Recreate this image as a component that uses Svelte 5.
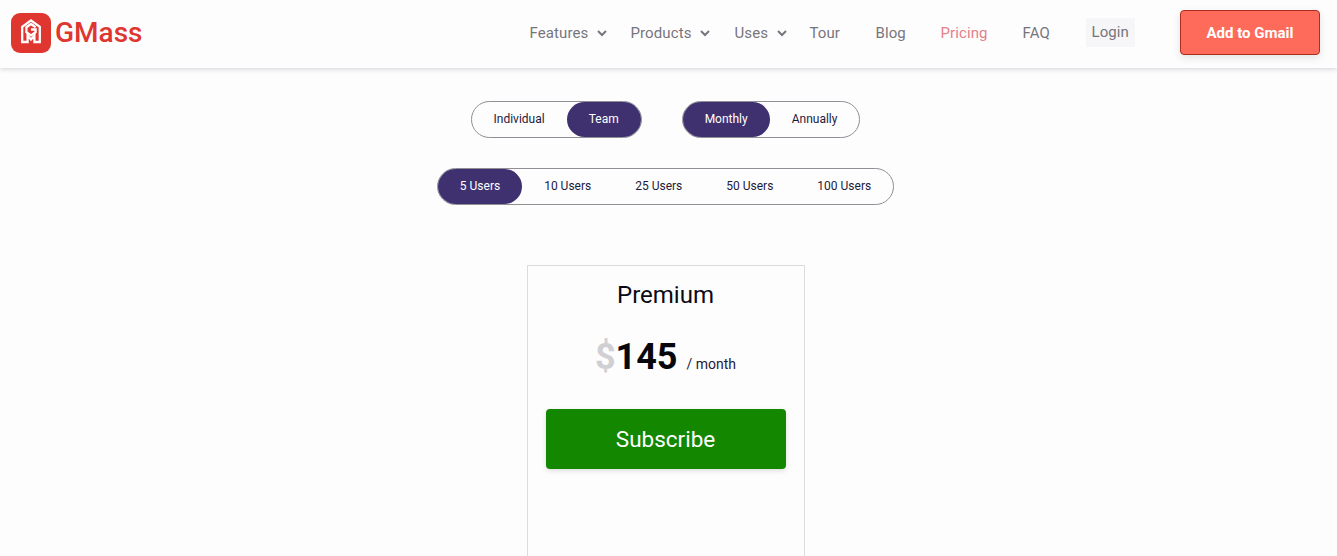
<script>
  const nav = [
    { label: 'Features', caret: true, w: 101 },
    { label: 'Products', caret: true, w: 104 },
    { label: 'Uses', caret: true, w: 75 },
    { label: 'Tour', w: 66 },
    { label: 'Blog', w: 65 },
    { label: 'Pricing', w: 82, cls: 'active' },
    { label: 'FAQ', w: 63 }
  ];
  const users = ['5 Users', '10 Users', '25 Users', '50 Users', '100 Users'];
</script>

<div class="page">
  <header>
    <a class="brand" href="#top">
      <span class="mark">
        <svg width="40" height="40" viewBox="0 0 40 40" fill="none" stroke="#fff" stroke-width="2.3">
          <path d="M11.2 29V13.8L20 7.4l8.8 6.4V29h-5.4V22.5L20 26.4l-3.4-3.9V29z" />
          <path d="M24.6 14.2 20 11l-4.6 3.2v5L20 22.4l4.6-3.2v-2.7H20" />
        </svg>
      </span>
      <span class="word">GMass</span>
    </a>
    <nav>
      {#each nav as item}
        <span class="item {item.cls ?? ''}" style="width:{item.w}px">
          {item.label}
          {#if item.caret}
            <svg class="caret" width="10" height="7" viewBox="0 0 10 7" fill="none" stroke="#77757c" stroke-width="2"><path d="M1 1l4 4 4-4" /></svg>
          {/if}
        </span>
      {/each}
      <span class="login">Login</span>
      <span class="cta">Add to Gmail</span>
    </nav>
  </header>

  <main>
    <div class="row">
      <div class="pill">
        <span class="opt wide">Individual</span>
        <span class="opt on team">Team</span>
      </div>
      <div class="pill">
        <span class="opt on monthly">Monthly</span>
        <span class="opt wide">Annually</span>
      </div>
    </div>
    <div class="row second">
      <div class="pill">
        {#each users as u, i}
          <span class="opt user" class:on={i === 0}>{u}</span>
        {/each}
      </div>
    </div>

    <section class="card">
      <h2>Premium</h2>
      <div class="price"><span class="dollar">$</span><span class="amount">145</span><span class="per">/ month</span></div>
      <button>Subscribe</button>
    </section>
  </main>
</div>

<style>
  :global(body) {
    margin: 0;
    background: #fefdfe;
    font-family: Roboto, "Liberation Sans", sans-serif;
    overflow: hidden;
  }
  .page { height: 556px; overflow: hidden; }
  header {
    height: 68px;
    background: #fefdfe;
    box-shadow: 0 1px 5px rgba(90, 90, 100, 0.28);
    display: flex;
    align-items: center;
    justify-content: space-between;
    padding: 0 17px 0 11px;
    box-sizing: border-box;
  }
  .brand { display: flex; align-items: center; gap: 4px; text-decoration: none; margin-top: -3px; }
  .mark {
    width: 40px; height: 40px; border-radius: 9px; background: #df3630;
    display: flex; align-items: center; justify-content: center;
  }
  .word { color: #df3630; font-size: 28px; font-weight: 500; }
  nav { display: flex; align-items: center; margin-top: -3px; }
  .item { color: #77757c; font-size: 15px; font-weight: 400; display: flex; align-items: center; gap: 9px; letter-spacing: 0.1px; }
  .item.active { color: #e58087; }
  .caret { margin-top: 1px; }
  .login {
    color: #77757c; font-size: 15px; background: #f6f5f8; padding: 0 6px;
    height: 29px; line-height: 29px; margin-right: 45px; letter-spacing: 0.1px;
  }
  .cta {
    width: 140px; height: 45px; box-sizing: border-box; border: 1px solid #a8301f; border-radius: 4px;
    background: #ff6b5b; color: #fff; font-size: 15px; font-weight: 700;
    display: flex; align-items: center; justify-content: center;
    box-shadow: 0 3px 8px rgba(0, 0, 0, 0.1);
  }
  main { display: flex; flex-direction: column; align-items: center; width: 1331px; }
  .row { display: flex; gap: 40px; margin-top: 33px; }
  .row.second { margin-top: 30px; }
  .pill {
    display: flex; height: 37px; box-sizing: border-box; border: 1px solid #8f8f95;
    border-radius: 19px; font-size: 12px; color: #1d1a3a;
  }
  .opt { display: flex; align-items: center; justify-content: center; height: 35px; padding-bottom: 2px; box-sizing: border-box; border-radius: 18px; }
  .on { background: #3f3170; color: #fff; }
  .wide { padding: 0 22px 2px; }
  .team { width: 74px; }
  .monthly { width: 87px; }
  .user { padding: 0 22px 2px; }
  .card {
    margin-top: 60px; width: 278px; height: 300px; box-sizing: border-box;
    border: 1px solid #dcdcde; display: flex; flex-direction: column; align-items: center;
    padding: 0 18px;
  }
  h2 { margin: 14px 0 0; font-size: 24px; font-weight: 400; color: #0a0a14; line-height: 30px; }
  .price { display: flex; align-items: baseline; margin-top: 26px; height: 44px; }
  .dollar { color: #d0cfd4; font-size: 36px; font-weight: 700; }
  .amount { color: #08080c; font-size: 36px; font-weight: 700; }
  .per { color: #1d1a3a; font-size: 14px; margin-left: 9px; }
  button {
    margin-top: 29px; width: 240px; height: 60px; border: 0; border-radius: 4px;
    background: #138700; color: #fff; font: 400 22.5px Roboto, sans-serif;
    box-shadow: 0 2px 5px rgba(0, 0, 0, 0.12);
  }
</style>
